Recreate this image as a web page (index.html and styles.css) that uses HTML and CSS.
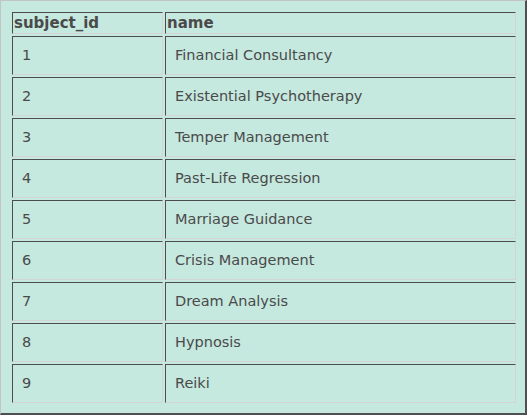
FILE: index.html
```html
<!DOCTYPE html>
<html>
<head>
<meta charset="utf-8">
<link rel="stylesheet" href="styles.css">
</head>
<body>
<div class="frame">
<table class="grid">
<thead>
<tr><th class="c1">subject_id</th><th class="c2">name</th></tr>
</thead>
<tbody>
<tr><td>1</td><td>Financial Consultancy</td></tr>
<tr><td>2</td><td>Existential Psychotherapy</td></tr>
<tr><td>3</td><td>Temper Management</td></tr>
<tr><td>4</td><td>Past-Life Regression</td></tr>
<tr><td>5</td><td>Marriage Guidance</td></tr>
<tr><td>6</td><td>Crisis Management</td></tr>
<tr><td>7</td><td>Dream Analysis</td></tr>
<tr><td>8</td><td>Hypnosis</td></tr>
<tr><td>9</td><td>Reiki</td></tr>
</tbody>
</table>
</div>
</body>
</html>
```
FILE: styles.css
```css
html, body {
  margin: 0;
  padding: 0;
}
body {
  width: 527px;
  height: 415px;
  background: #c5e8df;
}
.frame {
  box-sizing: border-box;
  width: 527px;
  height: 415px;
  background: #c5e8df;
  border-top: 1px solid #c4c4c4;
  border-left: 1px solid #c4c4c4;
  border-right: 2px solid #4f4f4f;
  border-bottom: 2px solid #4f4f4f;
  padding: 9px 0 0 9px;
  font-family: "DejaVu Sans", Verdana, sans-serif;
  color: #4a4a4a;
}
.grid {
  border-collapse: separate;
  border-spacing: 2px;
  table-layout: fixed;
  width: 508px;
}
.grid th, .grid td {
  border-style: solid;
  border-width: 1px;
  border-color: #4d4d4d #d4d4d4 #d4d4d4 #4d4d4d;
  text-align: left;
  vertical-align: middle;
}
.grid th {
  font-weight: bold;
  font-size: 15px;
  line-height: 18px;
  padding: 1px 1px;
  color: #4a4a4a;
}
.grid .c1 { width: 147px; }
.grid td {
  font-size: 14.5px;
  line-height: 17px;
  padding: 10px 9px;
}
```
